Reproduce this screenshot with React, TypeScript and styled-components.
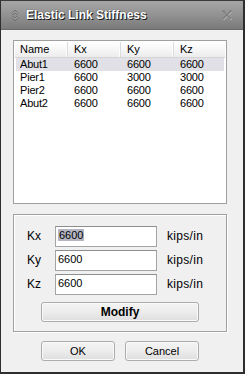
import React from "react";
import styled, { createGlobalStyle } from "styled-components";

const Global = createGlobalStyle`
  html, body { margin: 0; padding: 0; background: #f0f0f0; }
  body { font-family: "Liberation Sans", Arial, sans-serif; }
  * { box-sizing: border-box; }
`;

const Window = styled.div`
  width: 245px;
  height: 374px;
  display: flex;
  flex-direction: column;
  background: #f0f0f0;
  border-top: 1px solid #3a3a3a;
  border-left: 1px solid #2e2e2e;
  border-right: 2px solid #2e2e2e;
  border-bottom: 2px solid #2e2e2e;
`;

const TitleBar = styled.div`
  height: 29px;
  flex: none;
  display: flex;
  align-items: center;
  padding: 0 0 0 10px;
  background: linear-gradient(to bottom, #a6a6a6 0%, #949494 45%, #7a7a7a 100%);
  border-bottom: 1px solid #6a6a6a;
`;

const TitleText = styled.span`
  margin-left: 7px;
  font-size: 12px;
  font-weight: bold;
  color: #ffffff;
  text-shadow: 1px 1px 0 #1a1a1a, 0 0 1px #333;
  flex: 1;
  padding-bottom: 1px;
`;

const CloseBox = styled.div`
  width: 12px;
  height: 10px;
  margin-right: 10px;
  display: flex;
`;

const Body = styled.div`
  flex: 1;
  display: flex;
  flex-direction: column;
  padding: 10px 16px 0 12px;
`;

const List = styled.div`
  width: 214px;
  height: 164px;
  border: 1px solid #a0a0a0;
  background: #ffffff;
  padding: 1px 1px;
  display: flex;
  flex-direction: column;
`;

const HeaderRow = styled.div`
  display: grid;
  grid-template-columns: 53px 53px 53px 1fr;
  height: 16px;
  background: linear-gradient(to bottom, #ffffff 0%, #f6f6f6 50%, #ececec 100%);
  border-bottom: 1px solid #d5d5d5;
`;

const HeaderCell = styled.div<{ $first?: boolean }>`
  font-size: 11px;
  color: #000;
  padding-left: ${(p) => (p.$first ? 5 : 6)}px;
  line-height: 15px;
  border-right: 1px solid #dcdcdc;
  box-shadow: inset -1px 0 0 #fdfdfd;
  &:last-child { border-right: none; box-shadow: none; }
`;

const Row = styled.div<{ $selected?: boolean }>`
  display: grid;
  grid-template-columns: 53px 53px 53px 1fr;
  height: 13px;
  margin: 0 1px;
  background: ${(p) => (p.$selected ? "#e1e0e6" : "transparent")};
`;

const Cell = styled.div<{ $first?: boolean }>`
  font-size: 11px;
  line-height: 13px;
  color: #000;
  padding-left: ${(p) => (p.$first ? 4 : 5)}px;
  letter-spacing: -0.2px;
`;

const Group = styled.div`
  margin-top: 10px;
  width: 214px;
  height: 118px;
  border: 1px solid #a0a0a0;
  box-shadow: inset 1px 1px 0 #ffffff, 1px 1px 0 #ffffff;
  padding: 11px 0 0 13px;
  display: flex;
  flex-direction: column;
`;

const FieldRow = styled.div`
  display: flex;
  align-items: center;
  height: 20px;
  margin-bottom: 4px;
`;

const FieldLabel = styled.span`
  width: 28px;
  font-size: 12px;
  color: #000;
`;

const Field = styled.div`
  width: 102px;
  height: 21px;
  border: 1px solid #a4a4a4;
  border-top-color: #8e8e8e;
  background: #ffffff;
  font-size: 11px;
  padding: 2px 0 0 2px;
  line-height: 13px;
  color: #000;
`;

const Selected = styled.span`
  background: #b5b5c2;
  padding: 0 1px;
`;

const Unit = styled.span`
  margin-left: 10px;
  font-size: 12px;
  letter-spacing: 0.3px;
  color: #000;
`;

const Button = styled.div<{ $w: number; $bold?: boolean }>`
  width: ${(p) => p.$w}px;
  height: 20px;
  border: 1px solid #acacac;
  border-radius: 3px;
  background: linear-gradient(to bottom, #f4f4f4 0%, #ececec 50%, #dedede 100%);
  display: flex;
  align-items: center;
  justify-content: center;
  font-size: ${(p) => (p.$bold ? 12 : 11)}px;
  font-weight: ${(p) => (p.$bold ? "bold" : "normal")};
  color: #000;
  box-shadow: inset 0 0 0 1px #f9f9f9;
`;

const ModifyWrap = styled.div`
  margin: 4px 0 0 14px;
`;

const ButtonBar = styled.div`
  display: flex;
  gap: 10px;
  margin: 9px 0 0 28px;
`;

const rows = [
  ["Abut1", "6600", "6600", "6600"],
  ["Pier1", "6600", "3000", "3000"],
  ["Pier2", "6600", "6600", "6600"],
  ["Abut2", "6600", "6600", "6600"],
];

const TitleIcon = () => (
  <svg width="8" height="11" viewBox="0 0 8 11">
    <path d="M1 4.5 L4 1.5 L7 4.5" fill="none" stroke="#555" strokeWidth="2" />
    <path d="M1 4.5 L4 1.5 L7 4.5" fill="none" stroke="#d8d8d8" strokeWidth="1" />
    <path d="M1 6.5 L4 9.5 L7 6.5" fill="none" stroke="#555" strokeWidth="2" />
    <path d="M1 6.5 L4 9.5 L7 6.5" fill="none" stroke="#d8d8d8" strokeWidth="1" />
  </svg>
);

const CloseIcon = () => (
  <svg width="12" height="10" viewBox="0 0 12 10">
    <path d="M2 1 L10 9 M10 1 L2 9" stroke="#c8c8c8" strokeWidth="1.4" transform="translate(0.5,0.6)" />
    <path d="M2 1 L10 9 M10 1 L2 9" stroke="#7c7c7c" strokeWidth="1.6" />
    <path d="M1 1 H4 M8 1 H11" stroke="#7c7c7c" strokeWidth="1" />
  </svg>
);

export default function App() {
  const fields: [string, React.ReactNode][] = [
    ["Kx", <Selected key="s">6600</Selected>],
    ["Ky", "6600"],
    ["Kz", "6600"],
  ];
  return (
    <>
      <Global />
      <Window>
        <TitleBar>
          <TitleIcon />
          <TitleText>Elastic Link Stiffness</TitleText>
          <CloseBox>
            <CloseIcon />
          </CloseBox>
        </TitleBar>
        <Body>
          <List>
            <HeaderRow>
              <HeaderCell $first>Name</HeaderCell>
              <HeaderCell>Kx</HeaderCell>
              <HeaderCell>Ky</HeaderCell>
              <HeaderCell>Kz</HeaderCell>
            </HeaderRow>
            {rows.map((r, i) => (
              <Row key={r[0]} $selected={i === 0}>
                {r.map((c, j) => (
                  <Cell key={j} $first={j === 0}>
                    {c}
                  </Cell>
                ))}
              </Row>
            ))}
          </List>
          <Group>
            {fields.map(([label, value]) => (
              <FieldRow key={label}>
                <FieldLabel>{label}</FieldLabel>
                <Field>{value}</Field>
                <Unit>kips/in</Unit>
              </FieldRow>
            ))}
            <ModifyWrap>
              <Button $w={158} $bold>
                Modify
              </Button>
            </ModifyWrap>
          </Group>
          <ButtonBar>
            <Button $w={74}>OK</Button>
            <Button $w={74}>Cancel</Button>
          </ButtonBar>
        </Body>
      </Window>
    </>
  );
}
